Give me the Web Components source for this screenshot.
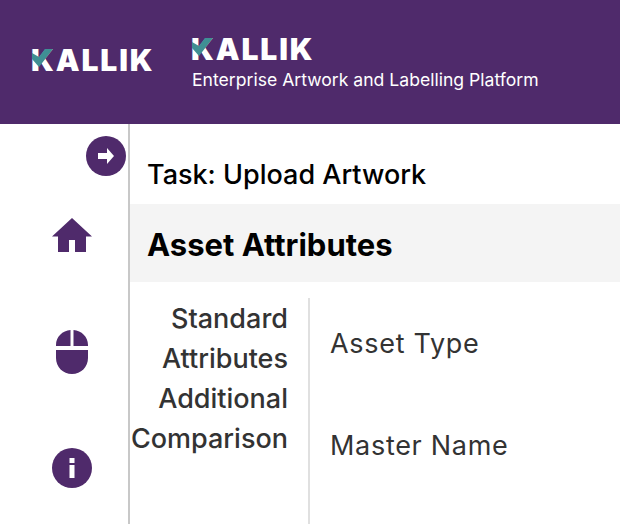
<!DOCTYPE html>
<html>
  <head>
    <style>
      html, body { margin: 0; height: 100%; overflow: hidden; background: #fff; }
      body { font-family: Inter, "Liberation Sans", Arial, sans-serif; }
    </style>
  </head>
  <body>
    <app-shell></app-shell>

    <script>
      // check mark sits over the first letter of the wordmark
      const logo = `<span class="kl"><svg viewBox="0 0 21 18" width="21" height="18"><path d="M0 4v6l7 8L21 0h-8L7 8z" fill="#3f8f94"/></svg>KALLIK</span>`;

      customElements.define("app-header", class extends HTMLElement {
        constructor() {
          super();
          this.attachShadow({ mode: "open" }).innerHTML = `
            <style>
              :host { display: flex; height: 124px; background: #4f2a6b; color: #fff; padding: 0 0 0 32px; box-sizing: border-box; }
              .kl { position: relative; display: block; font-size: 30px; font-weight: 900; line-height: 22px; height: 22px; letter-spacing: 1.9px; margin-left: -1px; }
              .kl svg { position: absolute; left: 1px; top: 0; }
              .small { margin-top: 49px; width: 160px; }
              .main { margin-top: 38px; display: flex; flex-direction: column; }
              .sub { font-size: 17.6px; line-height: 20px; margin-top: 10px; white-space: nowrap; }
            </style>
            <div class="small">${logo}</div>
            <div class="main">${logo}<div class="sub">Enterprise Artwork and Labelling Platform</div></div>`;
        }
      });

      customElements.define("side-nav", class extends HTMLElement {
        constructor() {
          super();
          this.attachShadow({ mode: "open" }).innerHTML = `
            <style>
              :host { display: block; width: 130px; flex: none; box-sizing: border-box; border-right: 2px solid #c8c8c8; position: relative; }
              svg { display: block; position: absolute; }
            </style>
            <svg style="left:86px;top:12px" width="40" height="40" viewBox="0 0 40 40"><circle cx="20" cy="20" r="20" fill="#4f2a6b"/><path d="M12 17h9v-5l7 8-7 8v-5h-9z" fill="#fff"/></svg>
            <svg style="left:52px;top:94px" width="40" height="34" viewBox="0 0 40 34"><path d="M20 0 0 18.500h6V34h11V22h6v12h11V18.500h6z" fill="#4f2a6b"/></svg>
            <svg style="left:56px;top:206px" width="32" height="44" viewBox="0 0 32 44"><path d="M14.500 0C6.500 .5 0 7 0 15v1h14.500zM17.500 0v16H32v-1C32 7 25.500 .5 17.500 0zM0 20v8c0 9 7 16 16 16s16-7 16-16v-8z" fill="#4f2a6b"/></svg>
            <svg style="left:52px;top:324px" width="40" height="40" viewBox="0 0 40 40"><circle cx="20" cy="20" r="20" fill="#4f2a6b"/><rect x="17.500" y="17" width="5" height="13" fill="#fff"/><rect x="17.500" y="10" width="5" height="5" fill="#fff"/></svg>`;
        }
      });

      customElements.define("asset-form", class extends HTMLElement {
        constructor() {
          super();
          this.attachShadow({ mode: "open" }).innerHTML = `
            <style>
              :host { display: flex; flex-direction: column; flex: 1; min-width: 0; color: #000; }
              .task { height: 80px; box-sizing: border-box; padding: 35px 0 0 17px; font-size: 27px; line-height: 32px; font-weight: 500; }
              .title { height: 78px; box-sizing: border-box; background: #f4f4f4; padding-left: 17px; font-size: 31px; line-height: 82px; font-weight: 700; }
              .body { display: flex; height: 226px; margin-top: 16px; }
              .tabs { width: 180px; box-sizing: border-box; border-right: 2px solid #e0e0e0; padding: 1px 20px 0 0; text-align: right; font-size: 27px; line-height: 40px; font-weight: 500; color: #333; flex: none; white-space: nowrap; }
              .fields { padding: 26px 0 0 20px; font-size: 27px; letter-spacing: .7px; color: #333; line-height: 40px; white-space: nowrap; }
              .fields div + div { margin-top: 62px; }
            </style>
            <div class="task">Task: Upload Artwork</div>
            <div class="title">Asset Attributes</div>
            <div class="body">
              <div class="tabs"><div>Standard</div><div>Attributes</div><div>Additional</div><div>Comparison</div></div>
              <div class="fields"><div>Asset Type</div><div>Master Name</div></div>
            </div>`;
        }
      });

      customElements.define("app-shell", class extends HTMLElement {
        constructor() {
          super();
          this.attachShadow({ mode: "open" }).innerHTML = `
            <style>
              :host { display: flex; flex-direction: column; height: 524px; width: 620px; overflow: hidden; }
              .row { display: flex; flex: 1; min-height: 0; }
            </style>
            <app-header></app-header>
            <div class="row"><side-nav></side-nav><asset-form></asset-form></div>`;
        }
      });
    </script>
  </body>
</html>
